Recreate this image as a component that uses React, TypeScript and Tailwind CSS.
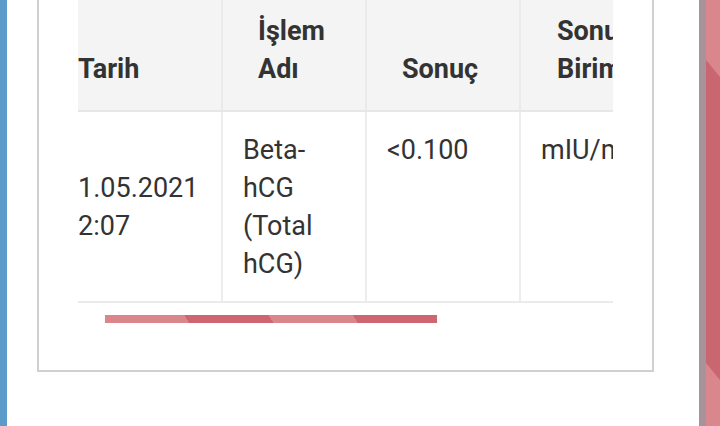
export default function App() {
  const hcell = "flex items-end h-[110px] pb-[22px] border-r-2 border-[#e9eaeb]";
  const bcell = "pt-[19px] pb-[18px] pl-[20px] border-r-2 border-[#eceded]";
  return (
    <div className="flex h-[426px] w-[720px] overflow-hidden bg-white font-['Roboto',sans-serif] text-[#333]">
      <div className="w-[7px] shrink-0 bg-[#5a9bc9]" />
      <div className="min-w-0 flex-1 pl-[30px] pr-[45px]">
        <div className="border-x-2 border-b-2 border-[#d0d0d0] px-[39px] pb-[47px]">
          <div className="overflow-hidden">
            <div className="w-[800px] leading-[38px]">
              <div className="grid grid-cols-[145px_144px_154px_357px] bg-[#f4f4f5] border-b-2 border-[#e6e7e8] text-[27px] font-bold">
                <div className={hcell}>Tarih</div>
                <div className={hcell + " pl-[35px]"}>
                  <span>İşlem<br />Adı</span>
                </div>
                <div className={hcell + " pl-[35px]"}>Sonuç</div>
                <div className="flex items-end h-[110px] pb-[22px] pl-[36px]">
                  <span>Sonuç<br />Birimi</span>
                </div>
              </div>
              <div className="grid grid-cols-[145px_144px_154px_357px] border-b-2 border-[#eaebec] text-[27px]">
                <div className="flex items-center pt-[19px] pb-[18px] border-r-2 border-[#eceded]">
                  <span>1.05.2021<br />2:07</span>
                </div>
                <div className={bcell}>
                  Beta-<br />hCG<br />(Total<br />hCG)
                </div>
                <div className={bcell}>&lt;0.100</div>
                <div className="pt-[19px] pb-[18px] pl-[20px]">mIU/mL</div>
              </div>
            </div>
          </div>
          <div className="mt-3 h-2 ml-[27px] w-[332px] bg-[linear-gradient(58deg,#d9868c_25%,#cd6670_25%,#cd6670_50%,#d9868c_50%,#d9868c_75%,#cd6670_75%)]" />
        </div>
      </div>
      <div className="w-[7px] shrink-0 bg-[#a8929c]" />
      <div className="relative w-[14px] shrink-0 bg-[#d9868d]">
        <div className="absolute inset-0 bg-[#c9666f] [clip-path:polygon(0_60px,100%_77px,100%_380px,0_363px)]" />
      </div>
    </div>
  );
}
